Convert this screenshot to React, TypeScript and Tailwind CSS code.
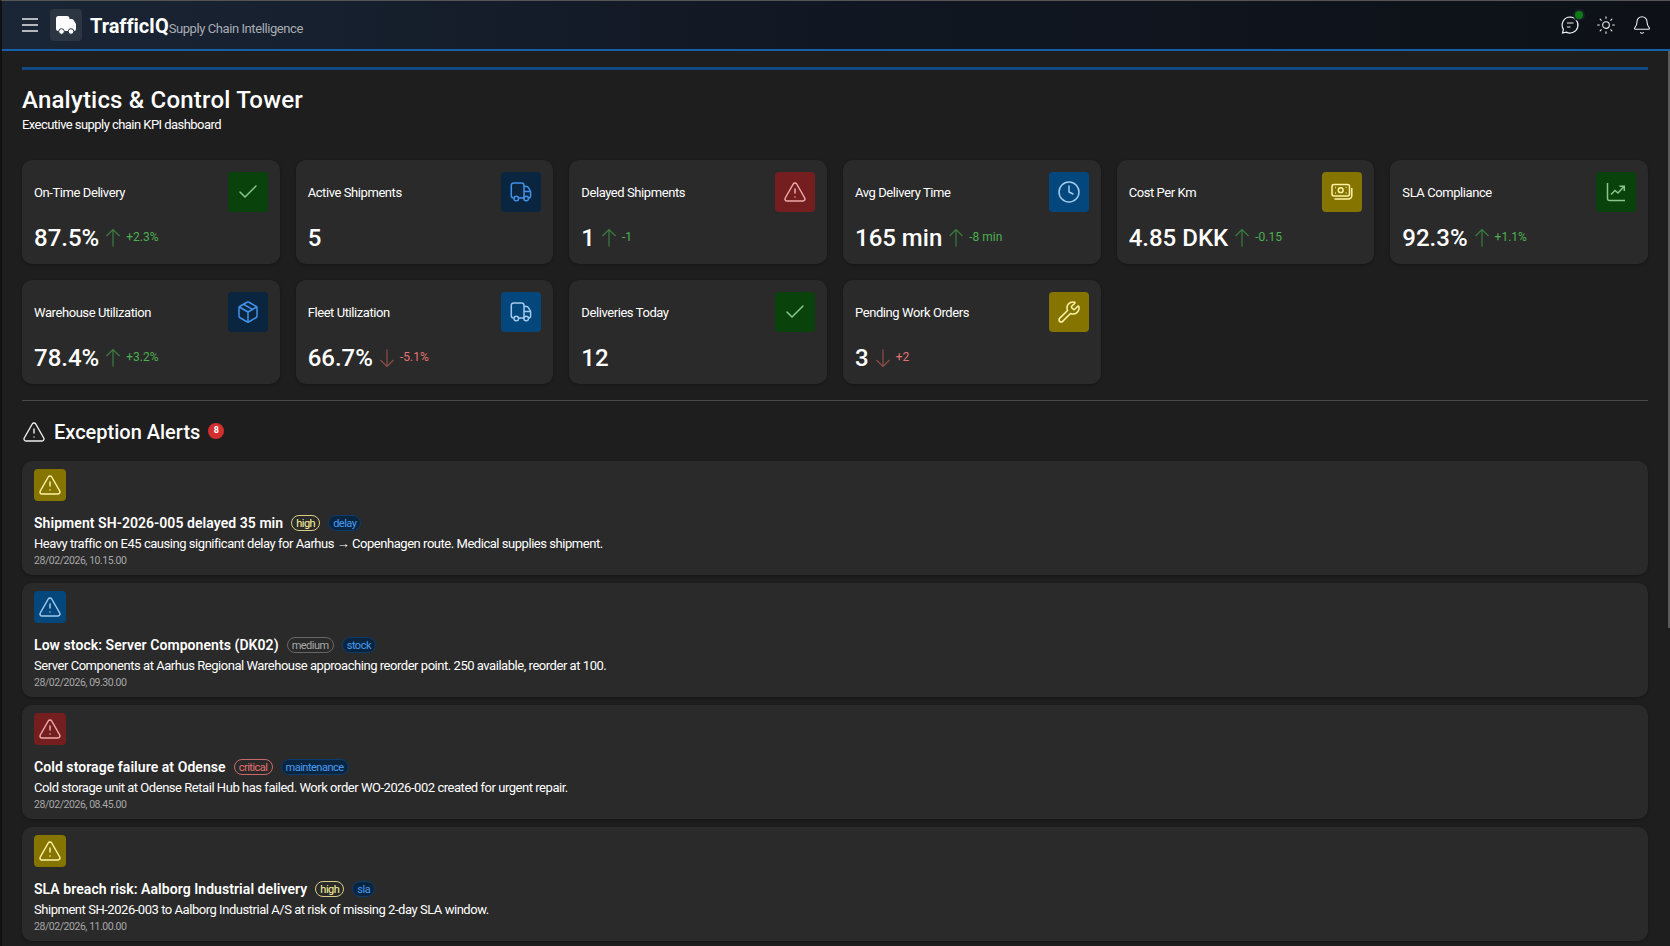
import { Bell, Check, Clock, Package, Sun, TriangleAlert, Wrench } from "lucide-react";
import type { ReactNode } from "react";

const FONT = "font-['Roboto','Noto_Sans',sans-serif]";

function TruckIcon({ className }: { className?: string }) {
  return (
    <svg viewBox="0 0 24 24" width="24" height="24" fill="none" stroke="currentColor" strokeWidth="1.5" className={className}>
      <path d="M4.800 18H4.500a2.200 2.200 0 0 1-2.200-2.200V5.200A2.200 2.200 0 0 1 4.500 3h8.300a2.200 2.200 0 0 1 2.200 2.200V18h-5.500" />
      <path d="M15 6.500h2.600a2 2 0 0 1 1.700 1l2 3.300a2 2 0 0 1 .3 1v4.200a2 2 0 0 1-2 2h-.4" />
      <path d="M15 11.500h6.500" />
      <circle cx="7.300" cy="18.500" r="2.300" />
      <circle cx="17.200" cy="18.500" r="2.300" />
    </svg>
  );
}

function CashIcon({ className }: { className?: string }) {
  return (
    <svg viewBox="0 0 24 24" width="24" height="24" fill="none" stroke="currentColor" strokeWidth="1.5" className={className}>
      <rect x="2" y="4.500" width="17.500" height="11.500" rx="2" />
      <circle cx="10.700" cy="10.200" r="2.400" />
      <path d="M5 7.500h.8M15.700 13h.8M5 13h.8M15.700 7.500h.8" />
      <path d="M4.500 19h14a3.300 3.300 0 0 0 3.300-3.300V8" />
    </svg>
  );
}

function TrendIcon({ className }: { className?: string }) {
  return (
    <svg viewBox="0 0 24 24" width="24" height="24" fill="none" stroke="currentColor" strokeWidth="1.5" className={className}>
      <path d="M3.500 3v15.500a2 2 0 0 0 2 2H21" />
      <path d="M7 14.500l4-4 3 2.500 6-6.500" />
      <path d="M15.500 6.200h4.800V11" />
    </svg>
  );
}

function ArrowUp({ down }: { down?: boolean }) {
  return (
    <svg viewBox="0 0 16 20" width="16" height="20" fill="none" stroke="currentColor" strokeWidth="1.2" className={down ? "text-[#8f4d4d]" : "text-[#3c7d40]"}>
      {down ? <path d="M8 1.500v17M1.500 12l6.500 6.500 6.500-6.500" /> : <path d="M8 1.500v17M1.500 8L8 1.500 14.500 8" />}
    </svg>
  );
}

const TONES = {
  green: "bg-[#0a420b] text-[#87c98a]",
  navy: "bg-[#0a2540] text-[#4293e8]",
  blue: "bg-[#03477c] text-[#a3cbee]",
  red: "bg-[#751e1f] text-[#eeaaaa]",
  yellow: "bg-[#857500] text-[#fdf3a6]",
};

type Kpi = {
  label: string;
  value: string;
  delta?: string;
  down?: boolean;
  tone: keyof typeof TONES;
  icon: ReactNode;
};

const thin = { size: 24, strokeWidth: 1.5 };

const kpis: Kpi[] = [
  { label: "On-Time Delivery", value: "87.5%", delta: "+2.3%", tone: "green", icon: <Check {...thin} /> },
  { label: "Active Shipments", value: "5", tone: "navy", icon: <TruckIcon /> },
  { label: "Delayed Shipments", value: "1", delta: "-1", tone: "red", icon: <TriangleAlert {...thin} /> },
  { label: "Avg Delivery Time", value: "165 min", delta: "-8 min", tone: "blue", icon: <Clock {...thin} /> },
  { label: "Cost Per Km", value: "4.85 DKK", delta: "-0.15", tone: "yellow", icon: <CashIcon /> },
  { label: "SLA Compliance", value: "92.3%", delta: "+1.1%", tone: "green", icon: <TrendIcon /> },
  { label: "Warehouse Utilization", value: "78.4%", delta: "+3.2%", tone: "navy", icon: <Package {...thin} /> },
  { label: "Fleet Utilization", value: "66.7%", delta: "-5.1%", down: true, tone: "blue", icon: <TruckIcon /> },
  { label: "Deliveries Today", value: "12", tone: "green", icon: <Check {...thin} /> },
  { label: "Pending Work Orders", value: "3", delta: "+2", down: true, tone: "yellow", icon: <Wrench {...thin} /> },
];

const PILLS = {
  high: "border-[#d9cd86] text-[#fff59d]",
  medium: "border-[#666666] text-[#a8a8a8]",
  critical: "border-[#c96a6a] text-[#e57373]",
  tag: "border-[#0d3c6b] bg-[#0a2540] text-[#4a9cf0]",
};

const alerts = [
  {
    tone: "yellow" as const,
    title: "Shipment SH-2026-005 delayed 35 min",
    severity: "high" as const,
    tag: "delay",
    text: "Heavy traffic on E45 causing significant delay for Aarhus → Copenhagen route. Medical supplies shipment.",
    time: "28/02/2026, 10.15.00",
  },
  {
    tone: "blue" as const,
    title: "Low stock: Server Components (DK02)",
    severity: "medium" as const,
    tag: "stock",
    text: "Server Components at Aarhus Regional Warehouse approaching reorder point. 250 available, reorder at 100.",
    time: "28/02/2026, 09.30.00",
  },
  {
    tone: "red" as const,
    title: "Cold storage failure at Odense",
    severity: "critical" as const,
    tag: "maintenance",
    text: "Cold storage unit at Odense Retail Hub has failed. Work order WO-2026-002 created for urgent repair.",
    time: "28/02/2026, 08.45.00",
  },
  {
    tone: "yellow" as const,
    title: "SLA breach risk: Aalborg Industrial delivery",
    severity: "high" as const,
    tag: "sla",
    text: "Shipment SH-2026-003 to Aalborg Industrial A/S at risk of missing 2-day SLA window.",
    time: "28/02/2026, 11.00.00",
  },
];

function Pill({ className, children }: { className: string; children: ReactNode }) {
  return (
    <span className={`flex h-4 items-center rounded-full border px-[4px] text-[11px] leading-none tracking-[-0.5px] ${className}`}>
      {children}
    </span>
  );
}

function KpiCard({ kpi }: { kpi: Kpi }) {
  return (
    <div className="h-[104px] rounded-[10px] bg-[#2a2a2a] p-3 shadow-[0_1px_3px_rgba(0,0,0,0.3)]">
      <div className="flex items-center justify-between">
        <span className="mt-0.5 text-[13px] leading-5 tracking-[-0.42px] text-white">{kpi.label}</span>
        <div className={`flex h-10 w-10 items-center justify-center rounded-[4px] ${TONES[kpi.tone]}`}>{kpi.icon}</div>
      </div>
      <div className="mt-2.5 flex h-8 items-center gap-[4px]">
        <span className="mr-[2px] text-[24px] font-medium leading-8 text-white">{kpi.value}</span>
        {kpi.delta && (
          <>
            <ArrowUp down={kpi.down} />
            <span className={`-mt-[2px] ml-[1px] text-[12px] ${kpi.down ? "text-[#e57373]" : "text-[#4caf50]"}`}>{kpi.delta}</span>
          </>
        )}
      </div>
    </div>
  );
}

export default function App() {
  return (
    <div className={`relative flex h-[946px] flex-col overflow-hidden border-t border-l-2 border-t-[#555555] border-l-[#111111] bg-[#1e1e1e] text-white ${FONT}`}>
      <header className="flex h-[50px] shrink-0 items-center border-b-2 border-[#1560a8] bg-gradient-to-r from-[#1a2535] via-[#111722] to-[#0d1117] pl-5 pr-2.5">
        <svg viewBox="0 0 16 14" width="16" height="14" fill="none" stroke="#e8e8e8" strokeWidth="1.3">
          <path d="M0 1h16M0 7h16M0 13h16" />
        </svg>
        <div className="ml-3 flex h-8 w-8 items-center justify-center rounded-[4px] bg-[#2c3542]">
          <svg viewBox="0 0 24 24" width="24" height="24" fill="#fff">
            <path d="M2 5.500A2.500 2.500 0 0 1 4.500 3H13a2.500 2.500 0 0 1 2.500 2.500V6h2.300a2 2 0 0 1 1.700 1l2.200 3.600a2 2 0 0 1 .3 1V16a2 2 0 0 1-2 2H4.500A2.500 2.500 0 0 1 2 15.500z" />
            <circle cx="7.500" cy="18.500" r="2.800" stroke="#2c3542" strokeWidth="1" />
            <circle cx="17" cy="18.500" r="2.800" stroke="#2c3542" strokeWidth="1" />
          </svg>
        </div>
        <span className="ml-2 mt-[2px] text-[20px] font-bold tracking-[-0.05px] text-white">TrafficIQ</span>
        <span className="mt-[7px] text-[13px] tracking-[-0.42px] text-[#a9adb3]">Supply Chain Intelligence</span>
        <div className="ml-auto flex items-center">
          <div className="relative flex h-9 w-9 items-center justify-center text-[#eeeeee]">
            <svg viewBox="0 0 20 20" width="20" height="20" fill="none" stroke="currentColor" strokeWidth="1.2">
              <path d="M10 2a8 8 0 1 1-3.700 15.100L2.500 18l.9-3.700A8 8 0 0 1 10 2z" />
              <path d="M7 8h6.500M7 12h3.500" />
            </svg>
            <span className="absolute right-[5px] top-[4px] h-2 w-2 rounded-full bg-[#0e7a10] shadow-[0_0_0_2px_#16202c]" />
          </div>
          <div className="flex h-9 w-9 items-center justify-center text-[#eeeeee]">
            <Sun size={20} strokeWidth={1.3} />
          </div>
          <div className="flex h-9 w-9 items-center justify-center text-[#eeeeee]">
            <Bell size={20} strokeWidth={1.3} />
          </div>
        </div>
      </header>

      <main className="flex-1 overflow-hidden pl-5 pr-[22px]">
        <div className="mt-4 h-[3px] bg-[#0f4a80]" />
        <h1 className="mt-3.5 text-[24px] font-medium leading-8 tracking-[0.2px]">Analytics &amp; Control Tower</h1>
        <p className="-mt-px text-[13px] leading-5 tracking-[-0.55px] text-white">Executive supply chain KPI dashboard</p>

        <div className="mt-[25px] grid grid-cols-6 gap-4">
          {kpis.map((kpi) => (
            <KpiCard key={kpi.label} kpi={kpi} />
          ))}
        </div>

        <div className="mt-4 h-px bg-[#4a4a4a]" />

        <div className="mt-[17px] flex h-7 items-center">
          <TriangleAlert size={24} strokeWidth={1.4} className="text-[#eeeeee]" />
          <h2 className="ml-2 text-[20px] font-medium leading-7">Exception Alerts</h2>
          <span className="-mt-0.5 ml-2 flex h-4 w-4 items-center justify-center rounded-full bg-[#d32f2f] text-[9px] font-bold">8</span>
        </div>

        <div className="mt-[15px] flex flex-col gap-2">
          {alerts.map((a) => (
            <div key={a.title} className="h-[114px] shrink-0 rounded-[10px] bg-[#2a2a2a] px-3 py-2 shadow-[0_1px_3px_rgba(0,0,0,0.3)]">
              <div className={`flex h-8 w-8 items-center justify-center rounded-[4px] ${TONES[a.tone]}`}>
                <TriangleAlert size={24} strokeWidth={1.5} />
              </div>
              <div className="mt-3 flex h-5 items-center gap-2">
                <span className="text-[14px] font-semibold leading-5 tracking-[0.06px]">{a.title}</span>
                <Pill className={PILLS[a.severity]}>{a.severity}</Pill>
                <Pill className={PILLS.tag}>{a.tag}</Pill>
              </div>
              <p className="mt-0.5 text-[13px] leading-[18px] tracking-[-0.46px] text-white">{a.text}</p>
              <p className="mt-px text-[10.5px] leading-[14px] tracking-[-0.45px] text-[#a8a8a8]">{a.time}</p>
            </div>
          ))}
        </div>
      </main>

      <div className="absolute right-0 top-[50px] h-[577px] w-0.5 bg-[#5a5a5a]" />
    </div>
  );
}
